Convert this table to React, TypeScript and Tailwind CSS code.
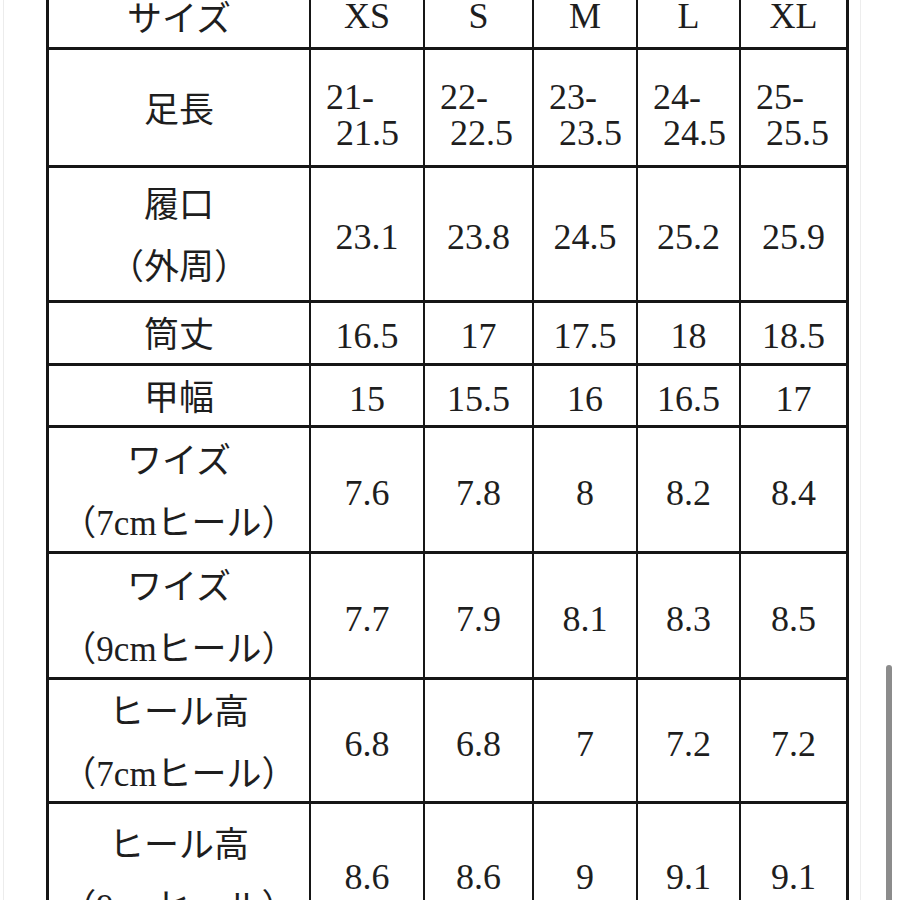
import React from "react";

type Row = {
  label: string[];
  values: (string | [string, string])[];
};

const sizes = ["XS", "S", "M", "L", "XL"];

const rows: Row[] = [
  {
    label: ["足長"],
    values: [
      ["21-", "21.5"],
      ["22-", "22.5"],
      ["23-", "23.5"],
      ["24-", "24.5"],
      ["25-", "25.5"]
    ]
  },
  { label: ["履口", "（外周）"], values: ["23.1", "23.8", "24.5", "25.2", "25.9"] },
  { label: ["筒丈"], values: ["16.5", "17", "17.5", "18", "18.5"] },
  { label: ["甲幅"], values: ["15", "15.5", "16", "16.5", "17"] },
  { label: ["ワイズ", "（7cmヒール）"], values: ["7.6", "7.8", "8", "8.2", "8.4"] },
  { label: ["ワイズ", "（9cmヒール）"], values: ["7.7", "7.9", "8.1", "8.3", "8.5"] },
  { label: ["ヒール高", "（7cmヒール）"], values: ["6.8", "6.8", "7", "7.2", "7.2"] },
  { label: ["ヒール高", "（9cmヒール）"], values: ["8.6", "8.6", "9", "9.1", "9.1"] }
];

function LabelCell({ lines }: { lines: string[] }) {
  return (
    <div className="flex flex-col items-center justify-center bg-white pt-[6px] text-[35px] leading-[62px] text-[#1e1e1e]">
      {lines.map((line) => (
        <span key={line}>{line}</span>
      ))}
    </div>
  );
}

function ValueCell({ value }: { value: string | [string, string] }) {
  if (Array.isArray(value)) {
    return (
      <div className="flex flex-col justify-center bg-white pt-[15px] text-[36px] leading-[36px] text-[#1e1e1e]">
        <span className="pl-[15px]">{value[0]}</span>
        <span className="pl-[25px]">{value[1]}</span>
      </div>
    );
  }
  return (
    <div className="flex items-center justify-center bg-white pt-[6px] text-[36px] leading-none text-[#1e1e1e]">
      {value}
    </div>
  );
}

export default function App() {
  return (
    <div className="relative flex h-[900px] w-[900px] overflow-hidden bg-white font-['Liberation_Serif','Noto_Sans_CJK_JP',serif]">
      <div className="w-[46px] shrink-0">
        <div className="ml-[3px] h-full w-px bg-[#ececec]" />
      </div>

      <div className="mt-[-16px] w-[803px] shrink-0 self-start">
        <div className="grid grid-cols-[260px_112px_107px_102px_101px_105px] grid-rows-[60px_115px_132px_60px_59px_123px_123px_121px_140px] gap-x-[2px] gap-y-[3px] bg-[#161616] p-[3px]">
          {/* header row sits partly above the viewport, as in the scrolled page */}
          <div className="flex items-start justify-center bg-white pt-[18px] text-[35px] leading-[30px] text-[#1e1e1e]">
            サイズ
          </div>
          {sizes.map((size) => (
            <div
              key={size}
              className="flex items-start justify-center bg-white pt-[14px] text-[36px] leading-[30px] text-[#1e1e1e]"
            >
              {size}
            </div>
          ))}
          {rows.map((row, i) => (
            <React.Fragment key={i}>
              <LabelCell lines={row.label} />
              {row.values.map((value, j) => (
                <ValueCell key={j} value={value} />
              ))}
            </React.Fragment>
          ))}
        </div>
      </div>

      <div className="ml-[11px] h-full w-px bg-[#ededed]" />

      <div className="absolute right-[8px] top-[665px] h-[260px] w-[6px] rounded-full bg-[#8c8c8c]" />
    </div>
  );
}
